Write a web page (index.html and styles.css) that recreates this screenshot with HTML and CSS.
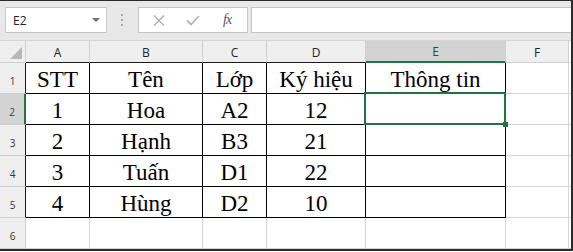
FILE: index.html
```html
<!DOCTYPE HTML>
<html>
	<head>
		<meta charset="UTF-8">
		<title>Bảng tính</title>
		<link rel="stylesheet" href="styles.css">
	</head>
	<body>
		<div class="app">
			<div class="toolbar">
				<div class="namebox">
					<span>E2</span>
					<svg width="8" height="5" viewBox="0 0 8 5"><path d="M0 0H8L4 4Z" fill="#707070"/></svg>
				</div>
				<div class="grip">
					<svg width="3" height="12" viewBox="0 0 3 12"><rect x="0" y="0" width="2" height="2" fill="#a8a8a8"/><rect x="0" y="5" width="2" height="2" fill="#a8a8a8"/><rect x="0" y="10" width="2" height="2" fill="#a8a8a8"/></svg>
				</div>
				<div class="fxbtns">
					<svg class="ico" width="12" height="11" viewBox="0 0 12 11"><path d="M1 0.5L11 10.5M11 0.5L1 10.5" stroke="#b4b4b4" stroke-width="1.6" fill="none"/></svg>
					<svg class="ico" width="14" height="11" viewBox="0 0 14 11"><path d="M1 5.5L5 9.5L13 1" stroke="#b4b4b4" stroke-width="1.8" fill="none"/></svg>
					<span class="fx">fx</span>
				</div>
				<div class="formula"></div>
			</div>
			<div class="sheet">
				<div class="corner"><svg width="12" height="12" viewBox="0 0 12 12"><path d="M12 0V12H0Z" fill="#b8b8b8"/></svg></div>
				<div class="colhead edge">A</div>
				<div class="colhead edge">B</div>
				<div class="colhead edge">C</div>
				<div class="colhead edge">D</div>
				<div class="colhead active">E</div>
				<div class="colhead">F</div>
				<div class="colhead tail"></div>

				<div class="rowhead edge">1</div>
				<div class="cell t">STT</div>
				<div class="cell t">Tên</div>
				<div class="cell t">Lớp</div>
				<div class="cell t">Ký hiệu</div>
				<div class="cell t">Thông tin</div>
				<div class="cell"></div>
				<div class="cell tail"></div>

				<div class="rowhead active">2</div>
				<div class="cell t">1</div>
				<div class="cell t">Hoa</div>
				<div class="cell t">A2</div>
				<div class="cell t">12</div>
				<div class="cell t sel"></div>
				<div class="cell"></div>
				<div class="cell tail"></div>

				<div class="rowhead edge">3</div>
				<div class="cell t">2</div>
				<div class="cell t">Hạnh</div>
				<div class="cell t">B3</div>
				<div class="cell t">21</div>
				<div class="cell t"></div>
				<div class="cell"></div>
				<div class="cell tail"></div>

				<div class="rowhead edge">4</div>
				<div class="cell t">3</div>
				<div class="cell t">Tuấn</div>
				<div class="cell t">D1</div>
				<div class="cell t">22</div>
				<div class="cell t"></div>
				<div class="cell"></div>
				<div class="cell tail"></div>

				<div class="rowhead edge">5</div>
				<div class="cell t">4</div>
				<div class="cell t">Hùng</div>
				<div class="cell t">D2</div>
				<div class="cell t">10</div>
				<div class="cell t"></div>
				<div class="cell"></div>
				<div class="cell tail"></div>

				<div class="rowhead">6</div>
				<div class="cell"></div>
				<div class="cell"></div>
				<div class="cell"></div>
				<div class="cell"></div>
				<div class="cell"></div>
				<div class="cell"></div>
				<div class="cell tail"></div>
			</div>
		</div>
	</body>
</html>
```

FILE: styles.css
```css
html, body{
	margin: 0;
	padding: 0;
	background-color: #ffffff;
	overflow: hidden;
}
*{
	box-sizing: border-box;
}
.app{
	width: 573px;
	height: 251px;
	border-top: 1px solid #2b2b2b;
	border-right: 2px solid #2b2b2b;
	border-bottom: 2px solid #2b2b2b;
	display: flex;
	flex-direction: column;
	overflow: hidden;
}
.toolbar{
	height: 40px;
	background-color: #e8e8e8;
	border-bottom: 1px solid #d6d6d6;
	display: flex;
	align-items: flex-start;
	padding-top: 6px;
	padding-left: 5px;
}
.namebox{
	width: 102px;
	height: 26px;
	background-color: #fff;
	border: 1px solid #c6c6c6;
	display: flex;
	align-items: center;
	justify-content: space-between;
	padding: 0 6px 0 7px;
	font-family: "Open Sans", "Liberation Sans", sans-serif;
	font-size: 12px;
	color: #222;
}
.namebox svg{
	margin-top: 1px;
}
.grip{
	width: 31px;
	height: 26px;
	display: flex;
	align-items: center;
	justify-content: center;
}
.fxbtns{
	width: 110px;
	height: 26px;
	background-color: #fff;
	border: 1px solid #c6c6c6;
	display: flex;
	align-items: center;
	padding-left: 14px;
}
.fxbtns .ico:first-child{
	margin-right: 21px;
}
.fxbtns .ico{
	margin-right: 23px;
}
.fx{
	font-family: "Liberation Serif", serif;
	font-style: italic;
	font-size: 14px;
	color: #555;
	letter-spacing: -1px;
}
.formula{
	flex: 1;
	height: 26px;
	margin-left: 3px;
	background-color: #fff;
	border: 1px solid #c6c6c6;
	border-right: none;
}
.sheet{
	display: grid;
	grid-template-columns: 26px 64px 113px 64px 99px 140px 63px 1fr;
	grid-template-rows: 22px repeat(6, 31px);
}
.corner{
	background-color: #efefef;
	border-right: 1px solid #cfcfcf;
	border-bottom: 1px solid #cfcfcf;
	display: flex;
	align-items: flex-end;
	justify-content: flex-end;
	padding: 0 3px 3px 0;
}
.colhead{
	background-color: #efefef;
	border-right: 1px solid #cfcfcf;
	border-bottom: 1px solid #cfcfcf;
	font-family: "Open Sans", "Liberation Sans", sans-serif;
	font-size: 12px;
	color: #222;
	display: flex;
	align-items: center;
	justify-content: center;
	padding-top: 1px;
}
.colhead.edge{
	border-bottom-color: #1a1a1a;
}
.colhead.active{
	background-color: #d3d3d3;
	border-bottom: 2px solid #217346;
	color: #1f4e36;
}
.colhead.tail{
	background-color: #ffffff;
	border-right: none;
	border-bottom-color: #d4d4d4;
}
.rowhead{
	background-color: #efefef;
	border-right: 1px solid #cfcfcf;
	border-bottom: 1px solid #cfcfcf;
	font-family: "Open Sans", "Liberation Sans", sans-serif;
	font-size: 10px;
	color: #333;
	display: flex;
	align-items: flex-end;
	justify-content: center;
	padding-bottom: 5px;
}
.rowhead.edge{
	border-right-color: #1a1a1a;
}
.rowhead.active{
	background-color: #d3d3d3;
	border-right: 2px solid #217346;
	color: #1f4e36;
}
.cell{
	border-right: 1px solid #d4d4d4;
	border-bottom: 1px solid #d4d4d4;
	font-family: "Liberation Serif", "Times New Roman", serif;
	font-size: 23px;
	color: #000;
	display: flex;
	align-items: flex-end;
	justify-content: center;
}
.cell.t{
	border-right-color: #000;
	border-bottom-color: #000;
}
.cell.tail{
	border-right: none;
}
.sel{
	position: relative;
}
.sel::after{
	content: "";
	position: absolute;
	left: -2px;
	top: -2px;
	right: -1px;
	bottom: -1px;
	border: 2px solid #217346;
}
.sel::before{
	content: "";
	position: absolute;
	right: -3px;
	bottom: -3px;
	width: 5px;
	height: 5px;
	background-color: #217346;
	z-index: 1;
}
```
